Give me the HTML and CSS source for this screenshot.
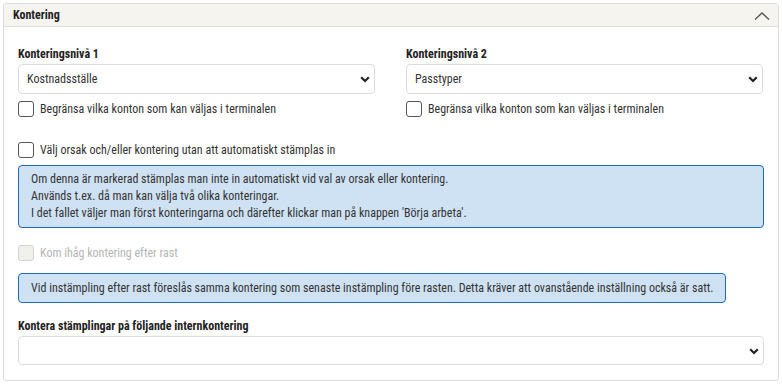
FILE: index.html
```html
<!DOCTYPE html>
<html lang="sv">
<head>
    <meta charset="UTF-8">
    <meta name="viewport" content="width=device-width, initial-scale=1.0">
    <title>Kontering</title>
    <link rel="stylesheet" href="styles.css">
</head>
<body>
    <div class="card">
        <div class="card-header">
            <span class="card-title">Kontering</span>
            <svg class="collapse-icon" viewBox="0 0 16 8" width="16" height="8">
                <path d="M1 7.5 L8 1 L15 7.5" fill="none" stroke="#555" stroke-width="1.3"/>
            </svg>
        </div>
        <div class="card-body">
            <div class="two-cols">
                <div class="field">
                    <label class="field-label">Konteringsnivå 1</label>
                    <div class="select-wrap">
                        <select class="select">
                            <option>Kostnadsställe</option>
                        </select>
                        <svg class="select-arrow" viewBox="0 0 10 7" width="10" height="7">
                            <path d="M1.2 1.3 L5 5 L8.8 1.3" fill="none" stroke="#222" stroke-width="2.2"/>
                        </svg>
                    </div>
                    <label class="check">
                        <span class="box"></span>
                        Begränsa vilka konton som kan väljas i terminalen
                    </label>
                </div>
                <div class="field">
                    <label class="field-label">Konteringsnivå 2</label>
                    <div class="select-wrap">
                        <select class="select">
                            <option>Passtyper</option>
                        </select>
                        <svg class="select-arrow" viewBox="0 0 10 7" width="10" height="7">
                            <path d="M1.2 1.3 L5 5 L8.8 1.3" fill="none" stroke="#222" stroke-width="2.2"/>
                        </svg>
                    </div>
                    <label class="check">
                        <span class="box"></span>
                        Begränsa vilka konton som kan väljas i terminalen
                    </label>
                </div>
            </div>

            <label class="check check-standalone">
                <span class="box"></span>
                Välj orsak och/eller kontering utan att automatiskt stämplas in
            </label>
            <div class="info info-full">
                Om denna är markerad stämplas man inte in automatiskt vid val av orsak eller kontering.<br>
                Används t.ex. då man kan välja två olika konteringar.<br>
                I det fallet väljer man först konteringarna och därefter klickar man på knappen 'Börja arbeta'.
            </div>

            <label class="check check-standalone disabled">
                <span class="box"></span>
                Kom ihåg kontering efter rast
            </label>
            <div class="info info-fit">
                Vid instämpling efter rast föreslås samma kontering som senaste instämpling före rasten. Detta kräver att ovanstående inställning också är satt.
            </div>

            <div class="field field-last">
                <label class="field-label">Kontera stämplingar på följande internkontering</label>
                <div class="select-wrap">
                    <select class="select">
                        <option></option>
                    </select>
                    <svg class="select-arrow" viewBox="0 0 10 7" width="10" height="7">
                        <path d="M1.2 1.3 L5 5 L8.8 1.3" fill="none" stroke="#222" stroke-width="2.2"/>
                    </svg>
                </div>
            </div>
        </div>
    </div>
</body>
</html>
```

FILE: styles.css
```css
body {
    margin: 0;
    padding: 3px;
    font-family: "Roboto Condensed", Roboto, sans-serif;
    font-size: 12px;
    color: #333;
    background: #fff;
}
.card {
    width: 776px;
    border: 1px solid #dcdcdc;
    border-radius: 3px;
    box-sizing: border-box;
}
.card-header {
    height: 22px;
    display: flex;
    align-items: center;
    justify-content: space-between;
    padding: 0 8px 0 9px;
    background-color: #f5f4f0;
    border-bottom: 1px solid #dedede;
}
.card-title {
    font-weight: bold;
    color: #222;
}
.collapse-icon {
    display: block;
    margin-top: 1px;
}
.card-body {
    padding: 19px 14px 15px 14px;
}
.two-cols {
    display: grid;
    grid-template-columns: 357px 357px;
    gap: 31px;
}
.field-label {
    display: block;
    font-weight: bold;
    color: #222;
    line-height: 16px;
    margin-bottom: 2px;
}
.select-wrap {
    position: relative;
}
.select {
    appearance: none;
    -webkit-appearance: none;
    display: block;
    width: 100%;
    height: 30px;
    padding: 0 8px;
    border: 1px solid #dcdcdc;
    border-radius: 4px;
    background: #fff;
    font-family: inherit;
    font-size: 12px;
    color: #333;
}
.select-arrow {
    position: absolute;
    right: 5px;
    top: 12px;
}
.check {
    display: flex;
    align-items: center;
    gap: 6px;
    margin-top: 7px;
    line-height: 16px;
}
.box {
    width: 14px;
    height: 14px;
    border: 1px solid #555;
    border-radius: 3px;
    background: #fff;
}
.check-standalone {
    margin-top: 25px;
}
.disabled {
    color: #b5b5b5;
    margin-top: 17px;
}
.disabled .box {
    border-color: #d4d4d4;
    background: #f0f0ec;
}
.info {
    margin-top: 7px;
    padding: 5px 12px;
    line-height: 17px;
    background-color: #cfe2f3;
    border: 1px solid #1b6ac0;
    border-radius: 4px;
    color: #333;
}
.info-fit {
    display: inline-block;
    margin-top: 12px;
    padding: 6px 12px 5px 12px;
}
.field-last {
    margin-top: 15px;
}
.field-last .select {
    height: 29px;
}
```
